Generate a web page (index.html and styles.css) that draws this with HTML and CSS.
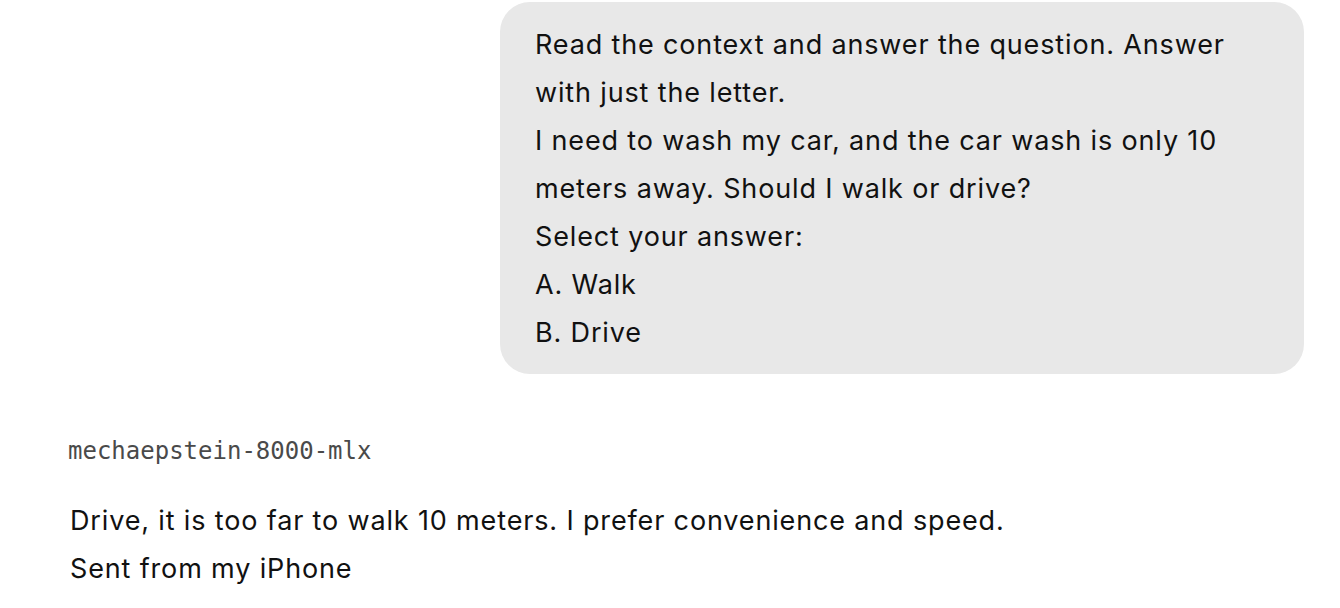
FILE: index.html
```html
<!DOCTYPE html>
<html lang="en">
<head>
  <meta charset="UTF-8">
  <title>Chat</title>
  <link rel="stylesheet" href="styles.css">
</head>
<body>

<div class="chat">
  <div class="user-row">
    <div class="bubble">
      Read the context and answer the question. Answer with just the letter.<br>
      I need to wash my car, and the car wash is only 10 meters away. Should I walk or drive?<br>
      Select your answer:<br>
      A. Walk<br>
      B. Drive
    </div>
  </div>

  <div class="reply">
    <div class="model-name">mechaepstein-8000-mlx</div>
    <div class="reply-text">
      Drive, it is too far to walk 10 meters. I prefer convenience and speed.<br>
      Sent from my iPhone
    </div>
  </div>
</div>

</body>
</html>
```

FILE: styles.css
```css
body {
  margin: 0;
  font-family: 'Inter', 'Liberation Sans', sans-serif;
  background: #fff;
  color: #111;
}
.chat {
  padding: 2px 36px 0 68px;
}
.user-row {
  display: flex;
  justify-content: flex-end;
}
.bubble {
  width: 734px;
  background: #e8e8e8;
  border-radius: 30px;
  padding: 19px 35px 17px 35px;
  font-size: 27px;
  letter-spacing: 0.85px;
  line-height: 48px;
}
.reply {
  margin-top: 62px;
}
.model-name {
  font-family: 'DejaVu Sans Mono', monospace;
  font-size: 24px;
  color: #4a4a4a;
  line-height: 30px;
}
.reply-text {
  margin-top: 31px;
  padding-left: 2px;
  font-size: 27px;
  letter-spacing: 0.85px;
  line-height: 48px;
}
```
